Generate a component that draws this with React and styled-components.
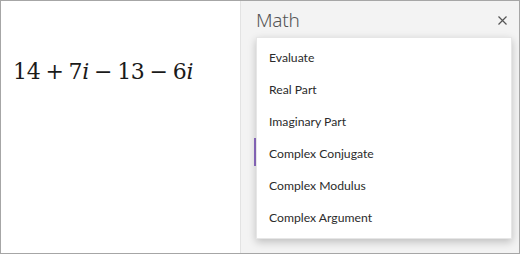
import React from "react";
import styled, { createGlobalStyle } from "styled-components";

const GlobalStyle = createGlobalStyle`
    html, body {
        margin: 0;
        padding: 0;
        background: #ffffff;
    }
    * {
        box-sizing: border-box;
    }
`;

const Frame = styled.div`
    width: 520px;
    height: 254px;
    border: 1px solid #a6a6a6;
    display: grid;
    grid-template-columns: 239px 1fr;
    overflow: hidden;
    font-family: "Segoe UI", "Noto Sans", sans-serif;
`;

const Canvas = styled.div`
    background: #ffffff;
    padding: 58px 0 0 12px;
`;

const Equation = styled.div`
    font-family: "DejaVu Serif", "Liberation Serif", serif;
    font-size: 22px;
    color: #1a1a1a;
    white-space: nowrap;
    letter-spacing: -0.3px;
    i {
        font-style: italic;
    }
`;

const Op = styled.span`
    padding: 0 5px;
`;

const Panel = styled.div`
    position: relative;
    background: #f3f3f3;
    border-left: 1px solid #e3e3e3;
    padding: 7px 11px 0 15px;
`;

const Header = styled.div`
    display: flex;
    align-items: center;
    justify-content: space-between;
    height: 24px;
`;

const Title = styled.h1`
    margin: 0;
    font-size: 19px;
    font-weight: 300;
    color: #555555;
    font-family: "Noto Sans", "Open Sans", sans-serif;
    letter-spacing: -0.2px;
`;

const Close = styled.button`
    border: none;
    background: none;
    padding: 0;
    width: 12px;
    height: 12px;
    display: flex;
    align-items: center;
    justify-content: center;
    color: #555555;
`;

const ActionSlot = styled.div`
    margin: 106px 0 0 -2px;
    height: 28px;
    border-left: 2px solid #8e6cc4;
    background: #ffffff;
`;

const Menu = styled.ul`
    position: absolute;
    top: 36px;
    left: 15px;
    width: 256px;
    margin: 0;
    padding: 3px 0 5px;
    list-style: none;
    background: #ffffff;
    border: 1px solid #e6e6e6;
    box-shadow: 0 3px 8px rgba(0, 0, 0, 0.22);
`;

const Item = styled.li`
    height: 32px;
    display: flex;
    align-items: center;
    padding-left: 12px;
    font-family: Lato, "Noto Sans", sans-serif;
    font-size: 12.2px;
    color: #2b2b2b;
`;

const actions = [
    "Evaluate",
    "Real Part",
    "Imaginary Part",
    "Complex Conjugate",
    "Complex Modulus",
    "Complex Argument",
];

const App = () => {
    return (
        <>
            <GlobalStyle />
            <Frame>
                <Canvas>
                    <Equation>
                        14<Op>+</Op>7<i>i</i><Op>−</Op>13<Op>−</Op>6<i>i</i>
                    </Equation>
                </Canvas>
                <Panel>
                    <Header>
                        <Title>Math</Title>
                        <Close aria-label="Close">
                            <svg width="9" height="9" viewBox="0 0 9 9">
                                <path d="M0.5 0.5 L8.5 8.5 M8.5 0.5 L0.5 8.5" stroke="#555" strokeWidth="1.2" />
                            </svg>
                        </Close>
                    </Header>
                    <ActionSlot />
                    <Menu>
                        {actions.map((action) => (
                            <Item key={action}>{action}</Item>
                        ))}
                    </Menu>
                </Panel>
            </Frame>
        </>
    );
};

export default App;
